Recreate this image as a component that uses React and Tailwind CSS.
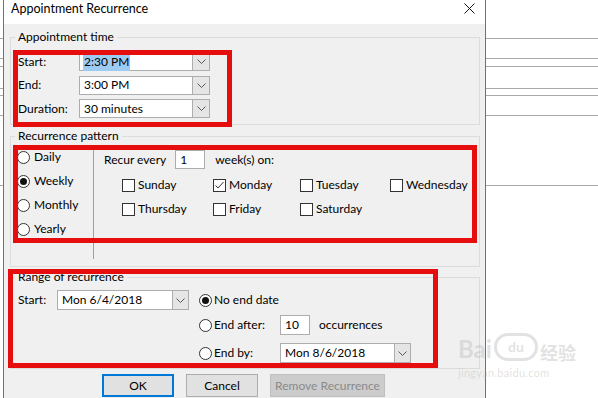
import React from "react";

const Chevron = () => (
  <svg width="9" height="5" viewBox="0 0 9 5">
    <path d="M0.5 0.5 L4.5 4.5 L8.5 0.5" fill="none" stroke="#5a5a5a" strokeWidth="1" />
  </svg>
);

function Combo({ value, inputClass, btnClass, selected }) {
  return (
    <div className="flex h-full">
      <div className={`${inputClass} h-full bg-white border border-[#adadad] flex items-center pl-[3px]`}>
        <span className={selected ? "bg-[#9ecbf2] px-px" : "px-px"}>{value}</span>
      </div>
      <div className={`${btnClass} h-full -ml-px border border-[#adadad] bg-[#e5e5e5] flex items-center justify-center`}>
        <Chevron />
      </div>
    </div>
  );
}

const Radio = ({ checked }) => (
  <span className="w-[13px] h-[13px] rounded-full border border-[#333] bg-white flex items-center justify-center shrink-0">
    {checked && <span className="w-[7px] h-[7px] rounded-full bg-[#111]" />}
  </span>
);

const Check = ({ checked }) => (
  <span className="w-[13px] h-[13px] border border-[#333] bg-white flex items-center justify-center shrink-0">
    {checked && (
      <svg width="11" height="11" viewBox="0 0 11 11">
        <path d="M1.5 5.5 L4 8 L9.5 2" fill="none" stroke="#333" strokeWidth="1" />
      </svg>
    )}
  </span>
);

function BgLines() {
  const cls = "h-px bg-[#a9a9a9]";
  return (
    <div className="flex flex-col">
      <div className={`${cls} mt-[38px]`} />
      <div className={`${cls} mt-[19px]`} />
      <div className={`${cls} mt-[7px]`} />
      <div className={`${cls} mt-[21px]`} />
      <div className={`${cls} mt-[6px]`} />
      <div className={`${cls} mt-[19px]`} />
      <div className={`${cls} mt-[69px]`} />
    </div>
  );
}

export default function App() {
  return (
    <div
      className="relative flex w-[598px] h-[398px] bg-white overflow-hidden text-[12px] text-black"
      style={{ fontFamily: "Lato, 'Noto Sans', sans-serif" }}
    >
      <div className="w-[3px] shrink-0">
        <BgLines />
      </div>

      {/* Dialog */}
      <div className="w-[483px] shrink-0 h-full border-x border-[#3b7fb0] flex flex-col">
        <div className="h-[24px] bg-white flex items-start justify-between shrink-0">
          <span className="pl-[7px] pt-[1px] leading-[16px] text-[12.5px]">Appointment Recurrence</span>
          <svg className="mt-[3px] mr-[10px]" width="11" height="11" viewBox="0 0 11 11">
            <path d="M0.5 0.5 L10.5 10.5 M10.5 0.5 L0.5 10.5" stroke="#111" strokeWidth="1" />
          </svg>
        </div>

        <div className="flex-1 bg-[#f0f0f0] pl-[6px] pr-[5px] flex flex-col">
          {/* Appointment time */}
          <fieldset className="border border-[#dcdcdc] h-[96px] mt-[5px] min-w-0">
            <legend className="ml-[4px] px-[3px] leading-[16px]">Appointment time</legend>
            <div className="flex flex-col gap-[4.5px] pt-[7px] pl-[7px]">
              {[
                ["Start:", "2:30 PM", true],
                ["End:", "3:00 PM", false],
                ["Duration:", "30 minutes", false],
              ].map(([l, v, s]) => (
                <div key={l} className="flex items-center h-[19px]">
                  <span className="w-[61px]">{l}</span>
                  <Combo value={v} selected={s} inputClass="w-[114px]" btnClass="w-[18px]" />
                </div>
              ))}
            </div>
          </fieldset>

          {/* Recurrence pattern */}
          <fieldset className="border border-[#dcdcdc] h-[139px] mt-[3px] min-w-0">
            <legend className="ml-[4px] px-[3px] leading-[16px]">Recurrence pattern</legend>
            <div className="flex">
              <div className="w-[82px] flex flex-col gap-[8px] pl-[6px] pt-[5px]">
                {[
                  ["Daily", false],
                  ["Weekly", true],
                  ["Monthly", false],
                  ["Yearly", false],
                ].map(([l, c]) => (
                  <div key={l} className="flex items-center h-[16px] gap-[4px]">
                    <Radio checked={c} />
                    <span>{l}</span>
                  </div>
                ))}
              </div>
              <div className="mt-[4px] h-[111px] flex-1 border-l border-[#a0a0a0] pl-[10px] pt-[2px]">
                <div className="flex items-center h-[19px]">
                  <span>Recur every</span>
                  <div className="ml-[9px] w-[30px] h-[19px] border border-[#adadad] bg-white pl-[4px] flex items-center">1</div>
                  <span className="ml-[10px]">week(s) on:</span>
                </div>
                <div className="grid grid-cols-[91px_87px_90px_auto] gap-y-[8px] mt-[8px] ml-[18px]">
                  {[
                    ["Sunday", false],
                    ["Monday", true],
                    ["Tuesday", false],
                    ["Wednesday", false],
                    ["Thursday", false],
                    ["Friday", false],
                    ["Saturday", false],
                  ].map(([l, c]) => (
                    <div key={l} className="flex items-center h-[16px] gap-[3px]">
                      <Check checked={c} />
                      <span>{l}</span>
                    </div>
                  ))}
                </div>
              </div>
            </div>
          </fieldset>

          {/* Range of recurrence */}
          <fieldset className="border border-[#dcdcdc] h-[100px] mt-[2px] min-w-0">
            <legend className="ml-[4px] px-[3px] leading-[16px]">Range of recurrence</legend>
            <div className="flex items-start pl-[7px] pt-[5px]">
              <div className="flex items-center h-[20px]">
                <span className="w-[39px]">Start:</span>
                <Combo value="Mon 6/4/2018" inputClass="w-[116px]" btnClass="w-[17px]" />
              </div>
              <div className="ml-[10px] flex flex-col">
                <div className="flex items-center h-[20px] gap-[2px]">
                  <Radio checked />
                  <span>No end date</span>
                </div>
                <div className="flex items-center h-[20px] mt-[5px]">
                  <Radio />
                  <span className="ml-[2px] w-[66px]">End after:</span>
                  <div className="w-[30px] h-[20px] border border-[#adadad] bg-white pl-[4px] flex items-center">10</div>
                  <span className="ml-[9px]">occurrences</span>
                </div>
                <div className="flex items-center h-[20px] mt-[8px]">
                  <Radio />
                  <span className="ml-[2px] w-[66px]">End by:</span>
                  <Combo value="Mon 8/6/2018" inputClass="w-[115px]" btnClass="w-[17px]" />
                </div>
              </div>
            </div>
          </fieldset>

          {/* Buttons */}
          <div className="flex gap-[12px] pl-[92px] mt-[5px]">
            <button className="w-[72px] h-[23px] border-2 border-[#0078d7] bg-[#e1e1e1] flex items-center justify-center">OK</button>
            <button className="w-[72px] h-[23px] border border-[#adadad] bg-[#e1e1e1] flex items-center justify-center">Cancel</button>
            <button className="w-[115px] h-[23px] border border-[#bfbfbf] bg-[#cccccc] text-[#8a8a8a] flex items-center justify-center">Remove Recurrence</button>
          </div>
        </div>
      </div>

      <div className="flex-1">
        <BgLines />
      </div>

      {/* Red annotation boxes */}
      <div className="absolute left-[13px] top-[50px] w-[219px] h-[77px] border-[5px] border-[#e50d0d] pointer-events-none" />
      <div className="absolute left-[13px] top-[145px] w-[464px] h-[98px] border-[5px] border-[#e50d0d] pointer-events-none" />
      <div className="absolute left-[8px] top-[269px] w-[430px] h-[99px] border-[5px] border-[#e50d0d] pointer-events-none" />

      {/* Watermark */}
      <div className="absolute left-[458px] top-[333px] pointer-events-none text-[rgba(190,190,190,0.45)]">
        <div className="flex items-end leading-none">
          <span className="text-[24px] font-bold">Bai</span>
          <span className="ml-[2px] w-[44px] h-[28px] rounded-full border-[3px] border-[rgba(190,190,190,0.45)] flex items-center justify-center text-[14px] font-bold">du</span>
          <span className="ml-[2px] text-[18px] font-bold" style={{ fontFamily: "'Noto Sans CJK SC', sans-serif" }}>经验</span>
        </div>
        <div className="text-[11px] mt-[4px] tracking-[0.3px]">jingyan.baidu.com</div>
      </div>
    </div>
  );
}
